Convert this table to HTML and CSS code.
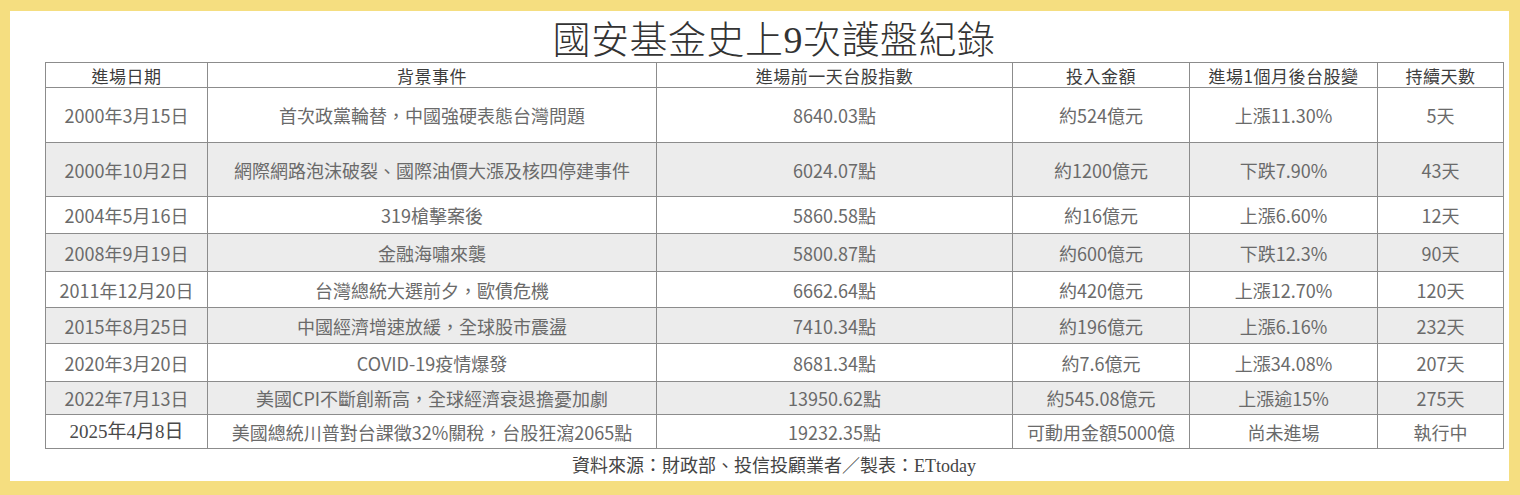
FILE: index.html
```html
<!DOCTYPE html>
<html lang="zh-Hant">
<head>
<meta charset="utf-8">
<title>國安基金史上9次護盤紀錄</title>
<link rel="stylesheet" href="styles.css">
</head>
<body>
<div class="frame">
  <div class="panel">
    <h1 class="title">國安基金史上9次護盤紀錄</h1>
    <table class="records">
      <colgroup>
        <col class="c-date"><col class="c-event"><col class="c-index"><col class="c-amount"><col class="c-change"><col class="c-days">
      </colgroup>
      <thead>
        <tr class="head">
          <th>進場日期</th><th>背景事件</th><th>進場前一天台股指數</th><th>投入金額</th><th>進場1個月後台股變</th><th>持續天數</th>
        </tr>
      </thead>
      <tbody>
        <tr class="r1"><td>2000年3月15日</td><td>首次政黨輪替，中國強硬表態台灣問題</td><td>8640.03點</td><td>約524億元</td><td>上漲11.30%</td><td>5天</td></tr>
        <tr class="r2 alt"><td>2000年10月2日</td><td>網際網路泡沫破裂、國際油價大漲及核四停建事件</td><td>6024.07點</td><td>約1200億元</td><td>下跌7.90%</td><td>43天</td></tr>
        <tr class="r3"><td>2004年5月16日</td><td>319槍擊案後</td><td>5860.58點</td><td>約16億元</td><td>上漲6.60%</td><td>12天</td></tr>
        <tr class="r4 alt"><td>2008年9月19日</td><td>金融海嘯來襲</td><td>5800.87點</td><td>約600億元</td><td>下跌12.3%</td><td>90天</td></tr>
        <tr class="r5"><td>2011年12月20日</td><td>台灣總統大選前夕，歐債危機</td><td>6662.64點</td><td>約420億元</td><td>上漲12.70%</td><td>120天</td></tr>
        <tr class="r6 alt"><td>2015年8月25日</td><td>中國經濟增速放緩，全球股市震盪</td><td>7410.34點</td><td>約196億元</td><td>上漲6.16%</td><td>232天</td></tr>
        <tr class="r7"><td>2020年3月20日</td><td>COVID-19疫情爆發</td><td>8681.34點</td><td>約7.6億元</td><td>上漲34.08%</td><td>207天</td></tr>
        <tr class="r8 alt"><td>2022年7月13日</td><td>美國CPI不斷創新高，全球經濟衰退擔憂加劇</td><td>13950.62點</td><td>約545.08億元</td><td>上漲逾15%</td><td>275天</td></tr>
        <tr class="r9"><td class="serif-date">2025年4月8日</td><td>美國總統川普對台課徵32%關稅，台股狂瀉2065點</td><td>19232.35點</td><td>可動用金額5000億</td><td>尚未進場</td><td>執行中</td></tr>
      </tbody>
    </table>
    <p class="source">資料來源：財政部、投信投顧業者／製表：ETtoday</p>
  </div>
</div>
</body>
</html>
```

FILE: styles.css
```css
html, body {
  margin: 0;
  padding: 0;
  background: #f5de80;
}

.frame {
  width: 1520px;
  height: 495px;
  padding: 11px 11px 14px 10px;
  box-sizing: border-box;
}

.panel {
  background: #ffffff;
  height: 470px;
  padding: 0 6px 0 35px;
  box-sizing: border-box;
  display: flex;
  flex-direction: column;
}

.title {
  margin: 0;
  height: 51px;
  font-family: "Liberation Serif", "Noto Sans CJK TC", serif;
  font-weight: 300;
  font-size: 38px;
  line-height: 58px;
  color: #333333;
  text-align: center;
  letter-spacing: 0.5px;
  overflow: hidden;
}

.records {
  width: 1458px;
  border-collapse: collapse;
  table-layout: fixed;
  font-family: "Noto Sans CJK TC", sans-serif;
  font-size: 18px;
  color: #6a6a6a;
}

.c-date { width: 162px; }
.c-event { width: 449px; }
.c-index { width: 356px; }
.c-amount { width: 177px; }
.c-change { width: 188px; }
.c-days { width: 126px; }

.records th,
.records td {
  border: 1px solid #8c8c8c;
  padding: 0;
  text-align: center;
  vertical-align: middle;
  white-space: nowrap;
  line-height: 1;
}

.records th {
  font-weight: 400;
  color: #3c3c3c;
  font-size: 17px;
  letter-spacing: 0.5px;
}

.head { height: 25px; }
.r1 { height: 55px; }
.r2 { height: 54px; }
.r3 { height: 37px; }
.r4 { height: 38px; }
.r5 { height: 36px; }
.r6 { height: 36px; }
.r7 { height: 38px; }
.r8 { height: 33px; }
.r9 { height: 34px; }

.alt td { background: #ececec; }

.records td.serif-date {
  font-family: "Liberation Serif", "Noto Sans CJK TC", serif;
  font-size: 19px;
  color: #4a4a4a;
}

.source {
  margin: 0;
  flex: 1;
  display: flex;
  align-items: center;
  justify-content: center;
  font-family: "Liberation Serif", "Noto Sans CJK TC", serif;
  font-size: 18px;
  color: #444444;
  padding-bottom: 2px;
}
```
